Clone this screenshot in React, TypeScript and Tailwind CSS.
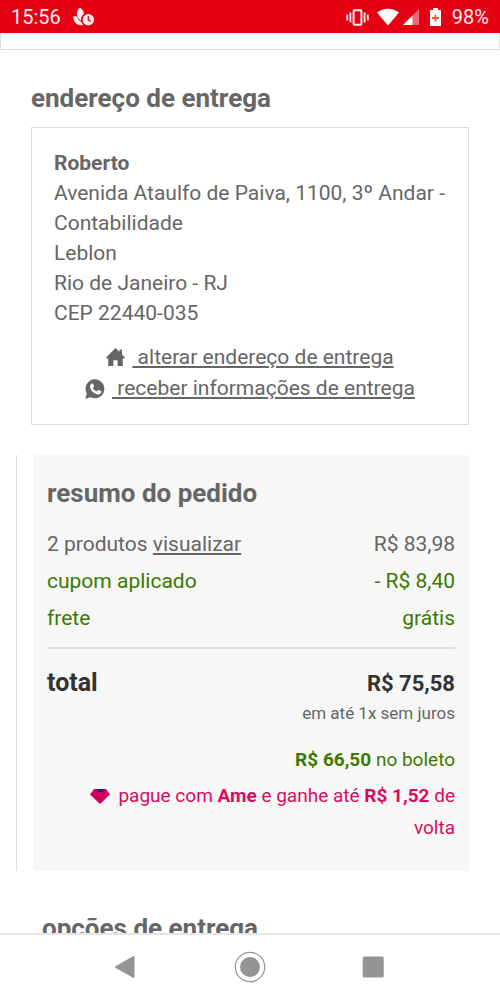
import type { ReactNode } from "react";

function StatusBar() {
  return (
    <header className="flex h-[33px] shrink-0 items-center justify-between bg-[#e60014] px-[11px] pt-px text-[20px] leading-6 text-[#ffeeee]">
      <div className="flex items-center gap-3">
        <span>15:56</span>
        <svg className="h-5 w-[22px]" viewBox="0 0 22 20" fill="currentColor" aria-hidden="true">
          <path d="M7 0.5C10 3 11.5 5 10.7 7.3C8.6 8.8 7.6 11 8 13.8C5.2 12 3 8 4 5.2C4.3 3.5 5.6 2 7 .5Z" />
          <path d="M.3 9.5C2 9 3.4 9.2 4.2 9.8C4.6 12 6.4 14.2 8.6 15.2L10.2 18C5.2 19 .2 16.2 .3 9.5Z" />
          <path
            fillRule="evenodd"
            d="M15.3 7a5.7 5.7 0 1 0 0 11.4a5.7 5.7 0 0 0 0-11.4ZM14.6 9.3h1.4v3.2l2.3 1.4l-.7 1.1l-3-1.8Z"
          />
        </svg>
      </div>
      <div className="flex items-center">
        <svg className="mr-2 h-[17px] w-[23px]" viewBox="0 0 23 17" aria-hidden="true">
          <rect x="7.6" y="1.2" width="7.8" height="14.6" rx="1" fill="none" stroke="currentColor" strokeWidth="2" />
          <path d="M4.4 3.5v10M1.2 5.5v6M18.6 3.5v10M21.8 5.5v6" stroke="currentColor" strokeWidth="1.8" />
        </svg>
        <svg className="mr-1 h-[18px] w-[22px]" viewBox="0 0 22 18" fill="#fff" aria-hidden="true">
          <path d="M0 4.6C6-.6 16-.6 22 4.6L11 17.6Z" />
        </svg>
        <svg className="mr-[11px] h-4 w-4" viewBox="0 0 16 16" fill="#fff" aria-hidden="true">
          <path d="M16 0V16H0Z" opacity=".4" />
          <path d="M9.5 6.5V16H0Z" />
        </svg>
        <svg className="mr-[11px] h-[18px] w-[11px]" viewBox="0 0 11 18" aria-hidden="true">
          <path d="M3 0h5v2h3v16H0V2h3Z" fill="#fff" />
          <path d="M5.5 6.5v7M2 10h7" stroke="#f0543c" strokeWidth="1.8" />
        </svg>
        <span>98%</span>
      </div>
    </header>
  );
}

function HomeIcon() {
  return (
    <svg className="h-[19px] w-[19px]" viewBox="0 0 19 19" fill="currentColor" aria-hidden="true">
      <path d="M9.5 0L13.5 3.8V1.5H16V6.4L19 9.4L17.8 10.8L16.8 10V18H11.6V12.2H7.4V18H2.2V10L1.2 10.8L0 9.4Z" />
    </svg>
  );
}

function WhatsAppIcon() {
  return (
    <svg className="h-5 w-5" viewBox="0 0 20 20" aria-hidden="true">
      <path
        fill="currentColor"
        d="M10.2.3a9.5 9.5 0 1 1-4.6 18L.2 19.8L1.8 14.6A9.5 9.5 0 0 1 10.2.3Z"
      />
      <path
        fill="#fff"
        d="M6.9 4.6c.5-.2 1-.1 1.2.4l.9 2.1c.1.4 0 .7-.3 1l-.8.9c.9 1.7 2.1 2.8 3.9 3.6l1.1-1.3c.3-.3.5-.3.9-.2l2.1 1c.4.2.5.5.4.9c-.2 1.6-1.4 2.5-3 2.5c-4.4-.5-8-4-8.3-8c0-1.2.9-2.5 1.9-2.9Z"
      />
    </svg>
  );
}

function CardLink({ icon, children }: { icon: ReactNode; children: ReactNode }) {
  return (
    <a href="#" className="flex items-center gap-[7px]">
      {icon}
      <span className="whitespace-pre underline underline-offset-2">{children}</span>
    </a>
  );
}

function SummaryRow({ label, value, className }: { label: ReactNode; value: ReactNode; className?: string }) {
  return (
    <div className={`flex justify-between ${className ?? ""}`}>
      <dt>{label}</dt>
      <dd>{value}</dd>
    </div>
  );
}

function NavBar() {
  return (
    <nav className="flex h-[67px] shrink-0 items-center justify-around border-t-2 border-[#e6e6e6] bg-white px-16 pb-0.5 text-[#949494]">
      <button type="button" aria-label="Voltar">
        <svg className="h-8 w-8" viewBox="0 0 32 32" fill="currentColor" stroke="currentColor" strokeWidth="2" strokeLinejoin="round">
          <path d="M6 16L23.500 6V26Z" />
        </svg>
      </button>
      <button type="button" aria-label="Início">
        <svg className="h-8 w-8" viewBox="0 0 32 32" fill="currentColor">
          <circle cx="16" cy="16" r="14.7" fill="none" stroke="currentColor" strokeWidth="1.2" />
          <circle cx="16" cy="16" r="10" />
        </svg>
      </button>
      <button type="button" aria-label="Recentes">
        <svg className="h-8 w-8" viewBox="0 0 32 32" fill="currentColor">
          <rect x="4.7" y="5.5" width="21" height="21" rx="1.5" />
        </svg>
      </button>
    </nav>
  );
}

export default function App() {
  return (
    <div className="flex h-screen flex-col bg-white font-['Roboto',sans-serif] text-[21px] text-[#666]">
      <StatusBar />
      <main className="min-h-0 flex-1 overflow-hidden">
        <div className="h-[17px] border-x border-b border-[#ddd]" />

        <section className="mx-[31px] mt-[30px]">
          <h2 className="text-[26px] leading-9 font-bold">endereço de entrega</h2>
          <div className="mt-[11px] border border-[#ddd] px-[22px] py-5">
            <address className="leading-[30px] not-italic">
              <strong className="block font-bold">Roberto</strong>
              Avenida Ataulfo de Paiva, 1100, 3º Andar - Contabilidade
              <br />
              Leblon
              <br />
              Rio de Janeiro - RJ
              <br />
              CEP 22440-035
            </address>
            <div className="mt-[14px] flex flex-col items-center leading-[31px]">
              <CardLink icon={<HomeIcon />}> alterar endereço de entrega</CardLink>
              <CardLink icon={<WhatsAppIcon />}> receber informações de entrega</CardLink>
            </div>
          </div>
        </section>

        <div className="mt-[30px] mr-[31px] ml-4 border-l border-[#ddd] pl-4">
          <section className="bg-[#f7f7f7] px-[14px] pt-5 pb-[27px]">
            <h2 className="text-[26px] leading-9 font-bold">resumo do pedido</h2>
            <dl className="mt-[15px] border-b-2 border-[#e0e0e0] pb-[10px] leading-[37px]">
              <SummaryRow
                label={
                  <>
                    2 produtos <a href="#" className="underline underline-offset-2">visualizar</a>
                  </>
                }
                value="R$ 83,98"
              />
              <SummaryRow className="text-[#3b7a00]" label="cupom aplicado" value="- R$ 8,40" />
              <SummaryRow className="text-[#3b7a00]" label="frete" value="grátis" />
            </dl>
            <dl className="mt-4">
              <SummaryRow
                className="items-center leading-9 font-bold text-[#333]"
                label={<span className="text-[25px]">total</span>}
                value={<span className="text-[22px]">R$ 75,58</span>}
              />
            </dl>
            <div className="text-right text-[19px] leading-8">
              <p className="text-[17px] leading-[22px]">em até 1x sem juros</p>
              <p className="mt-5 text-[#3b7a00]">
                <strong>R$ 66,50</strong> no boleto
              </p>
              <p className="mt-1 pl-6 text-[#dc0a5f]">
                <svg className="mr-2 inline h-[15px] w-5" viewBox="0 0 20 15" aria-hidden="true">
                  <path d="M4 0H16L20 5.5L10 15L0 5.5Z" fill="#d1005d" />
                  <path d="M6 0H15L12.5 3H8Z" fill="#2b1a8c" />
                </svg>
                pague com <strong>Ame</strong> e ganhe até <strong>R$ 1,52</strong> de volta
              </p>
            </div>
          </section>
        </div>

        <section className="mt-[39px] ml-[42px]">
          <h2 className="text-[26px] leading-9 font-bold">opções de entrega</h2>
        </section>
      </main>
      <NavBar />
    </div>
  );
}
